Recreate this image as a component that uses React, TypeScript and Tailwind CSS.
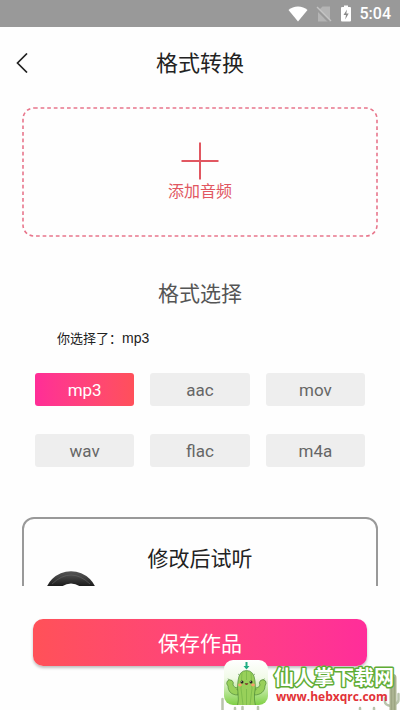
import React, { useState } from 'react';

const formats = ['mp3', 'aac', 'mov', 'wav', 'flac', 'm4a'];

function StatusBar() {
	return (
		<div className="flex h-[27px] shrink-0 items-center justify-end bg-[#999999] pr-[9px] text-white">
			<svg className="mr-2 h-4 w-5" viewBox="0 0 20 16" fill="currentColor" aria-hidden="true">
				<path d="M10 15.5 0.5 4C3 1.8 6.3 0.5 10 0.5S17 1.8 19.5 4Z" />
			</svg>
			<svg className="mr-2 h-4 w-4" viewBox="0 0 16 16" aria-hidden="true">
				<path d="M6.5 0.5H14v15H2V5Z" fill="#b4b4b4" />
				<path d="M0.5 2.5 13.5 15.5" stroke="#999999" strokeWidth="3" />
				<path d="M1 1 15 15" stroke="#c4c4c4" strokeWidth="1.4" />
			</svg>
			<svg className="mr-2 h-[17px] w-3" viewBox="0 0 12 17" aria-hidden="true">
				<path d="M4 0.5h4V2h2q1 0 1 1v12.5q0 1-1 1H2q-1 0-1-1V3q0-1 1-1h2Z" fill="#fff" />
				<path d="M7 4.5 3.5 10H6l-.8 4.5L8.7 8.5H6.3Z" fill="#8a8a8a" />
			</svg>
			<span className="font-[Roboto,sans-serif] text-base font-medium leading-5">5:04</span>
		</div>
	);
}

function Disc() {
	return (
		<svg className="h-[54px] w-[54px]" viewBox="0 0 54 54" aria-hidden="true">
			<defs>
				<linearGradient id="disc" x1="0" y1="0" x2="0" y2="1">
					<stop offset="0" stopColor="#555555" />
					<stop offset="0.1" stopColor="#444444" />
					<stop offset="0.27" stopColor="#1c1c1c" />
					<stop offset="1" stopColor="#333333" />
				</linearGradient>
			</defs>
			<circle cx="27" cy="27" r="26.7" fill="url(#disc)" />
			<path d="M8 13Q27 -5 46 13" fill="none" stroke="#6c6c6c" strokeWidth="0.5" />
			<circle cx="27" cy="27.5" r="15" fill="#fff" />
		</svg>
	);
}

function CactusLogo() {
	return (
		<svg className="h-[45px] w-11" viewBox="0 0 44 45" aria-hidden="true">
			<defs>
				<linearGradient id="tile" x1="0" y1="0" x2="0" y2="1">
					<stop offset="0" stopColor="#ffffff" />
					<stop offset="0.4" stopColor="#f1fae8" />
					<stop offset="1" stopColor="#7fd044" />
				</linearGradient>
				<clipPath id="tileClip">
					<rect width="44" height="45" rx="9" />
				</clipPath>
			</defs>
			<g clipPath="url(#tileClip)">
				<rect width="44" height="45" fill="url(#tile)" />
				<g stroke="#4f8a38" strokeWidth="0.7" fill="#98d05a">
					<path d="M14 35C7 35 4 31 4 26Q2 24 3 21.5Q5 18.5 8 20.5Q10 22 9 25Q10 28.5 15 28Z" />
					<path d="M30 35C37 35 41 31 41 26Q43 23 41.5 21Q39 18.5 36.5 20.5Q34.5 22.5 36 25Q35 28.5 29 28Z" />
					<path d="M13.5 46Q15 40 14 33Q13 27 14 21Q15 10.5 22.5 10.5T31 21Q32 28 30.5 34Q30 40 31.5 46Z" />
				</g>
				<path d="M18 12.5Q15.5 28 19 45M22.5 11V20M22.5 29V45M27 12.5Q29.5 28 26 45" fill="none" stroke="#6fb043" strokeWidth="0.6" />
				<path d="M15.5 15l-1.5-1M29.5 15l1.5-1M14 30l-1.5-.5M31 30l1.5-.5M5 20l-1-1.5M39.5 20l1-1.5" stroke="#4f8a38" strokeWidth="0.6" />
				<circle cx="18" cy="22" r="1.5" fill="#2b2420" />
				<circle cx="27" cy="22" r="1.5" fill="#2b2420" />
				<circle cx="17.6" cy="21.5" r="0.4" fill="#fff" />
				<circle cx="26.6" cy="21.5" r="0.4" fill="#fff" />
				<ellipse cx="16" cy="25" rx="1.9" ry="1.4" fill="#f6a06c" />
				<ellipse cx="29" cy="25" rx="1.9" ry="1.4" fill="#f6a06c" />
				<path d="M21 23.5Q22.5 26.5 24 23.5Z" fill="#b8453c" stroke="#57301f" strokeWidth="0.5" />
				<path d="M21.5 2h2v4h2l-3 3.5-3-3.5h2Z" fill="#1fae83" />
			</g>
		</svg>
	);
}

function Watermark() {
	return (
		<div className="absolute right-0 bottom-0 flex h-[50px] w-[180px] items-start">
			<svg className="absolute right-0 bottom-0 h-10 w-[180px]" viewBox="0 0 180 40" aria-hidden="true">
				<g fill="none" stroke="#b9c4ac" strokeWidth="2.5" strokeLinecap="round">
					<path d="M2.5 29V40M15 38v2M22.5 37v3M38 37v3M140 38v2M154 38v2" />
					<path d="M165 28v4q0 3 6 4M178.5 24v6q0 3-4 4" />
				</g>
				<path d="M169.5 40V8q0-4 3.500-4t3.500 4v32Z" fill="#abb391" />
				<path d="M171.5 7v33M174.5 7v33" stroke="#98a17e" strokeWidth="0.7" />
			</svg>
			<a href="http://www.hebxqrc.com" className="relative ml-1 flex items-start gap-[5px]">
				<CactusLogo />
				<div className="flex flex-col whitespace-nowrap pt-[3px]">
					<svg className="h-7 w-[124px] overflow-visible" viewBox="0 0 124 28">
						<text
							x="1"
							y="22"
							className="font-['Noto_Sans_CJK_SC',sans-serif] text-[20px] font-bold [paint-order:stroke]"
							fill="#fff"
							stroke="#5fac35"
							strokeWidth="3"
							strokeLinejoin="round"
						>
							仙人掌下载网
						</text>
					</svg>
					<span className="pl-[3px] font-['Open_Sans',sans-serif] text-xs font-bold leading-3 text-[#e23237]">
						www.hebxqrc.com
					</span>
				</div>
			</a>
		</div>
	);
}

export default function App() {
	const [selected, setSelected] = useState('mp3');

	return (
		<div className="relative flex h-screen flex-col overflow-hidden bg-[#fefefe] font-['Liberation_Sans','Noto_Sans_CJK_SC',sans-serif]">
			<StatusBar />

			<header className="grid h-16 shrink-0 grid-cols-[40px_1fr_40px] items-center pt-2">
				<button type="button" aria-label="返回" className="flex h-8 items-center justify-end pr-3">
					<svg className="h-5 w-3" viewBox="0 0 12 20" fill="none" stroke="#222" strokeWidth="1.7" aria-hidden="true">
						<path d="M11 0.5 1.5 10 11 19.5" />
					</svg>
				</button>
				<h1 className="pt-0.5 text-center text-[22px] leading-8 text-[#222222]">格式转换</h1>
			</header>

			<main className="min-h-0 flex-1 overflow-hidden px-[22px] pt-4">
				<button type="button" className="relative flex h-[130px] w-full flex-col items-center pt-[35px] text-[#e15761]">
					{/* dashed outline follows the width of the button */}
					<svg className="absolute inset-0 h-full w-full overflow-visible p-px" aria-hidden="true">
						<rect width="100%" height="100%" rx="11" fill="none" stroke="#e8768c" strokeWidth="1.6" strokeDasharray="3.7 2.9" />
					</svg>
					<svg className="h-[38px] w-[38px]" viewBox="0 0 38 38" stroke="currentColor" strokeWidth="2" aria-hidden="true">
						<path d="M19 0.5v37M0.5 19h37" />
					</svg>
					<span className="text-base leading-6">添加音频</span>
				</button>

				<section className="px-[13px]">
					<h2 className="pt-[39px] text-center text-[21px] leading-9 text-[#555555]">格式选择</h2>
					<p className="mt-4 pl-[22px] text-[13px] leading-5 text-[#222222]">
						你选择了：<span className="text-sm leading-5">{selected}</span>
					</p>
					<div className="mt-6 grid grid-cols-3 gap-x-4 gap-y-7 font-[Roboto,sans-serif]">
						{formats.map((format) => (
							<button
								key={format}
								type="button"
								onClick={() => setSelected(format)}
								className={
									format === selected
										? 'h-[33px] rounded-[3px] bg-linear-to-r from-[#ff2d97] to-[#ff505a] pt-0.5 text-[17px] text-white'
										: 'h-[33px] rounded-[3px] bg-[#eeeeee] pt-0.5 text-[17px] text-[#666666]'
								}
							>
								{format}
							</button>
						))}
					</div>
				</section>

				<section className="mt-[50px] rounded-xl border-2 border-[#999999] px-5 pt-6 pb-8">
					<h2 className="text-center text-[21px] leading-8 text-[#222222]">修改后试听</h2>
					<div className="-mt-1">
						<Disc />
					</div>
				</section>
			</main>

			<footer className="h-[124px] shrink-0 px-[33px] pt-[33px]">
				<button
					type="button"
					className="h-[47px] w-full rounded-[10px] bg-linear-to-r from-[#ff5158] to-[#ff2d9a] pt-0.5 text-[21px] text-white shadow-[0_2px_3px_rgba(0,0,0,0.25)]"
				>
					保存作品
				</button>
			</footer>

			<Watermark />
		</div>
	);
}
